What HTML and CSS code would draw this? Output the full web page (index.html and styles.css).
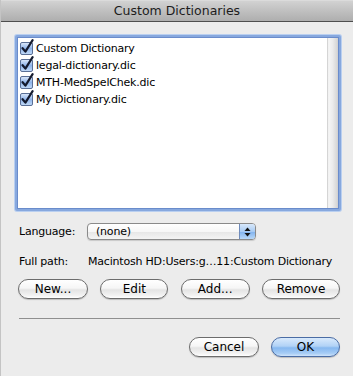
FILE: index.html
```html
<!DOCTYPE html>
<html>
<head>
<meta charset="utf-8">
<link rel="stylesheet" href="styles.css">
</head>
<body>
<div class="window">
  <div class="titlebar">Custom Dictionaries</div>
  <div class="content">
    <div class="list">
      <div class="items">
        <div class="row"><svg class="cb" width="14" height="16" viewBox="0 0 14 16"><defs><linearGradient id="g1" x1="0" y1="0" x2="0" y2="1"><stop offset="0" stop-color="#dfeafa"/><stop offset="0.5" stop-color="#8fb4ea"/><stop offset="1" stop-color="#c4dcf8"/></linearGradient></defs><rect x="0.5" y="3.5" width="12" height="12" rx="1.5" fill="url(#g1)" stroke="#5a6f96"/><path d="M2.6 9.2 L5.4 12.6 L12.6 1.2" fill="none" stroke="#141a2e" stroke-width="2.2" stroke-linecap="round" stroke-linejoin="round"/></svg><span>Custom Dictionary</span></div>
        <div class="row"><svg class="cb" width="14" height="16" viewBox="0 0 14 16"><rect x="0.5" y="3.5" width="12" height="12" rx="1.5" fill="url(#g1)" stroke="#5a6f96"/><path d="M2.6 9.2 L5.4 12.6 L12.6 1.2" fill="none" stroke="#141a2e" stroke-width="2.2" stroke-linecap="round" stroke-linejoin="round"/></svg><span>legal-dictionary.dic</span></div>
        <div class="row"><svg class="cb" width="14" height="16" viewBox="0 0 14 16"><rect x="0.5" y="3.5" width="12" height="12" rx="1.5" fill="url(#g1)" stroke="#5a6f96"/><path d="M2.6 9.2 L5.4 12.6 L12.6 1.2" fill="none" stroke="#141a2e" stroke-width="2.2" stroke-linecap="round" stroke-linejoin="round"/></svg><span>MTH-MedSpelChek.dic</span></div>
        <div class="row"><svg class="cb" width="14" height="16" viewBox="0 0 14 16"><rect x="0.5" y="3.5" width="12" height="12" rx="1.5" fill="url(#g1)" stroke="#5a6f96"/><path d="M2.6 9.2 L5.4 12.6 L12.6 1.2" fill="none" stroke="#141a2e" stroke-width="2.2" stroke-linecap="round" stroke-linejoin="round"/></svg><span>My Dictionary.dic</span></div>
      </div>
      <div class="track"></div>
    </div>

    <div class="field lang-row">
      <span class="label">Language:</span>
      <div class="popup">
        <span class="popup-text">(none)</span>
        <span class="stepper"><svg width="7" height="10" viewBox="0 0 7 10"><path d="M3.5 0.5 L6.5 4 L0.5 4 Z" fill="#111"/><path d="M0.5 6 L6.5 6 L3.5 9.5 Z" fill="#111"/></svg></span>
      </div>
    </div>

    <div class="field path-row">
      <span class="label">Full path:</span>
      <span class="value">Macintosh HD:Users:g…11:Custom Dictionary</span>
    </div>

    <div class="btn-row">
      <button class="btn w-new">New...</button>
      <button class="btn w-edit">Edit</button>
      <button class="btn w-add">Add...</button>
      <button class="btn w-remove">Remove</button>
    </div>

    <div class="separator"></div>

    <div class="btn-row bottom">
      <button class="btn w-cancel">Cancel</button>
      <button class="btn default w-ok">OK</button>
    </div>
  </div>
</div>
</body>
</html>
```
FILE: styles.css
```css
* { box-sizing: border-box; }
html, body {
  margin: 0;
  padding: 0;
}
body {
  width: 353px;
  height: 376px;
  overflow: hidden;
  background: #ececec;
  font-family: "DejaVu Sans", "Liberation Sans", sans-serif;
  color: #000;
}
.window {
  height: 376px;
  border-left: 1px solid #c4c4c4;
  background: #ececec;
}
.titlebar {
  height: 22px;
  line-height: 21px;
  text-align: center;
  font-size: 12.5px;
  color: #1c1c1c;
  border-bottom: 1px solid #4e4e4e;
  background: linear-gradient(#e4e4e4 0, #d2d2d2 1px, #c4c4c4 40%, #aeaeae 100%);
}
.content {
  padding: 13px 13px 0 14px;
}
.list {
  width: 326px;
  height: 176px;
  display: flex;
  border: 2px solid #87a8de;
  border-radius: 2px;
  box-shadow: 0 0 0 1px #b9cff0, inset 0 0 0 1px #6a8ccb;
  background: #fff;
  padding: 1px;
}
.items {
  flex: 1;
  padding: 2px 0 0 2px;
  background: #fff;
}
.track {
  width: 11px;
  background: linear-gradient(to right, #c6c6c6 0, #f6f6f6 15%, #ececec 50%, #dadada 85%, #cfcfcf 100%);
}
.row {
  height: 17px;
  display: flex;
  align-items: center;
  font-size: 11px;
  letter-spacing: -0.2px;
  white-space: nowrap;
}
.cb {
  margin-right: 2px;
  margin-top: -3px;
  flex: none;
}
.field {
  display: flex;
  align-items: center;
  font-size: 11px;
  letter-spacing: -0.2px;
  padding-left: 4px;
}
.label {
  width: 68px;
  flex: none;
}
.lang-row {
  margin-top: 12px;
  height: 17px;
}
.popup {
  width: 169px;
  height: 17px;
  display: flex;
  border: 1px solid #8a8a8a;
  border-radius: 4px;
  background: linear-gradient(#ffffff 0, #f7f7f7 50%, #e6e6e6 51%, #f4f4f4 100%);
  box-shadow: 0 1px 1px rgba(0,0,0,0.15);
  overflow: hidden;
}
.popup-text {
  flex: 1;
  padding-left: 8px;
  line-height: 15px;
}
.stepper {
  width: 16px;
  display: flex;
  align-items: center;
  justify-content: center;
  border-left: 1px solid #6f8bbb;
  background: linear-gradient(#d8e8fb 0, #a8cbf3 50%, #7fb1ee 51%, #b8d8f8 100%);
}
.path-row {
  margin-top: 14px;
  height: 14px;
}
.value {
  margin-left: 1px;
  white-space: nowrap;
}
.btn-row {
  display: flex;
  justify-content: space-between;
  margin-top: 11px;
  padding-left: 3px;
}
.btn {
  height: 20px;
  padding: 0;
  border: 1px solid #6c6c6c;
  border-radius: 10px;
  background: linear-gradient(#ffffff 0, #f6f6f6 45%, #e4e4e4 55%, #f2f2f2 85%, #ffffff 100%);
  box-shadow: 0 1px 1px rgba(0,0,0,0.2);
  font-family: "DejaVu Sans", "Liberation Sans", sans-serif;
  font-size: 12px;
  color: #000;
  line-height: 17px;
}
.w-new { width: 70px; }
.w-edit { width: 68px; }
.w-add { width: 69px; }
.w-remove { width: 78px; }
.w-cancel { width: 70px; }
.w-ok { width: 69px; }
.separator {
  height: 1px;
  background: #8f8f8f;
  margin: 19px 0 0 4px;
}
.btn-row.bottom {
  justify-content: flex-end;
  gap: 12px;
  margin-top: 18px;
}
.btn.default {
  border-color: #4a6ca4;
  background: linear-gradient(#d9eafc 0, #b1d2f6 45%, #86b8f0 55%, #a6ccf5 85%, #cfe4fb 100%);
}
```
